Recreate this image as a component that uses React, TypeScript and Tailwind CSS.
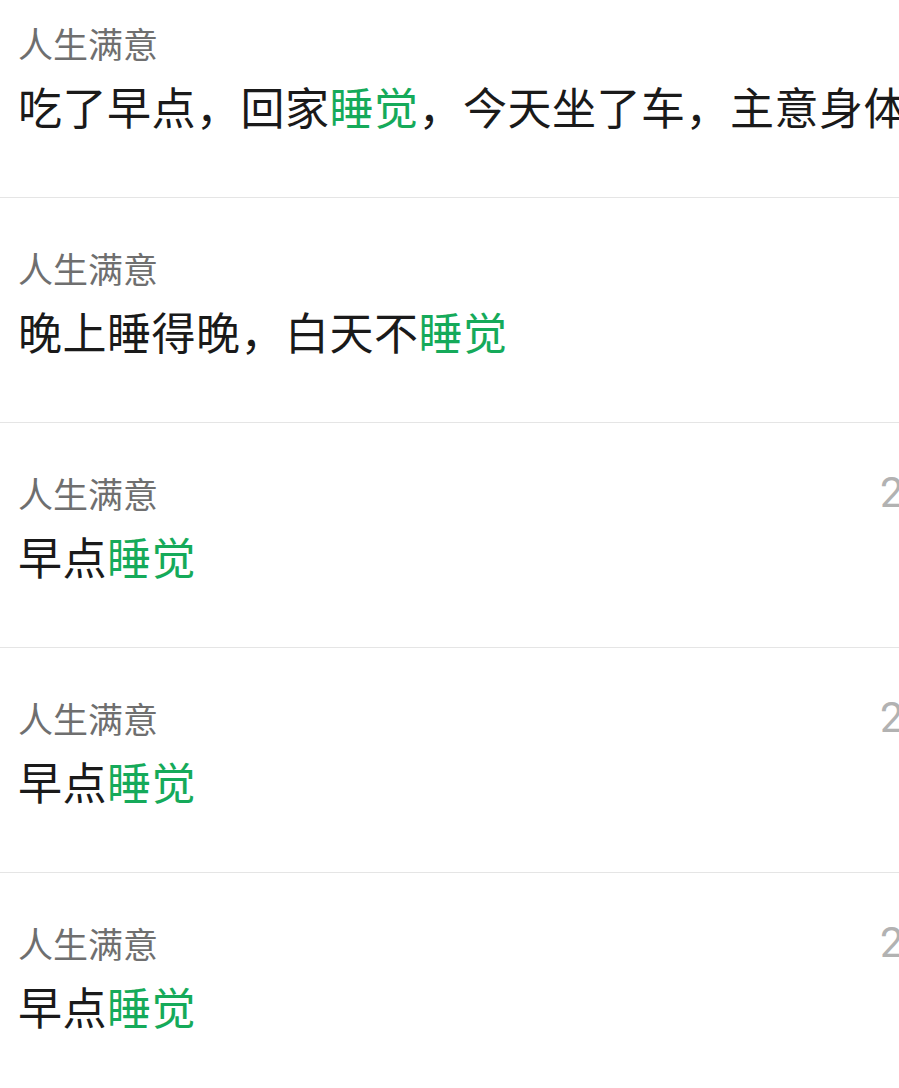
const rows: { body: [string, boolean][]; time?: string }[] = [
  {
    body: [
      ["吃了早点，回家", false],
      ["睡觉", true],
      ["，今天坐了车，主意身体健康，多喝水", false],
    ],
  },
  {
    body: [
      ["晚上睡得晚，白天不", false],
      ["睡觉", true],
    ],
  },
  { body: [["早点", false], ["睡觉", true]], time: "2020/05/12" },
  { body: [["早点", false], ["睡觉", true]], time: "2020/05/12" },
  { body: [["早点", false], ["睡觉", true]], time: "2020/05/12" },
];

export default function App() {
  return (
    <div
      className="w-[899px] h-[1088px] overflow-hidden bg-white"
      style={{ fontFamily: "'Noto Sans CJK SC', 'Noto Sans', sans-serif" }}
    >
      <div className="-mt-[27px] flex flex-col">
        {rows.map((row, i) => (
          <div key={i} className="h-[225px] border-b border-[#e5e5e5] pl-[18px] pt-[46px] flex flex-col">
            <div className="flex items-center">
              <span className="flex-1 text-[35px] leading-[48px] text-[#6f6f6f]">人生满意</span>
              {row.time && (
                <div className="w-[19px] overflow-visible whitespace-nowrap">
                  <span className="text-[42px] leading-[48px] text-[#b2b2b2] font-['Roboto',sans-serif]">
                    {row.time}
                  </span>
                </div>
              )}
            </div>
            <div className="mt-[9px] text-[44px] tracking-[0.5px] leading-[60px] text-[#1a1a1a] whitespace-nowrap">
              {row.body.map(([t, hl], j) => (
                <span key={j} className={hl ? "text-[#15aa5a]" : ""}>
                  {t}
                </span>
              ))}
            </div>
          </div>
        ))}
      </div>
    </div>
  );
}
